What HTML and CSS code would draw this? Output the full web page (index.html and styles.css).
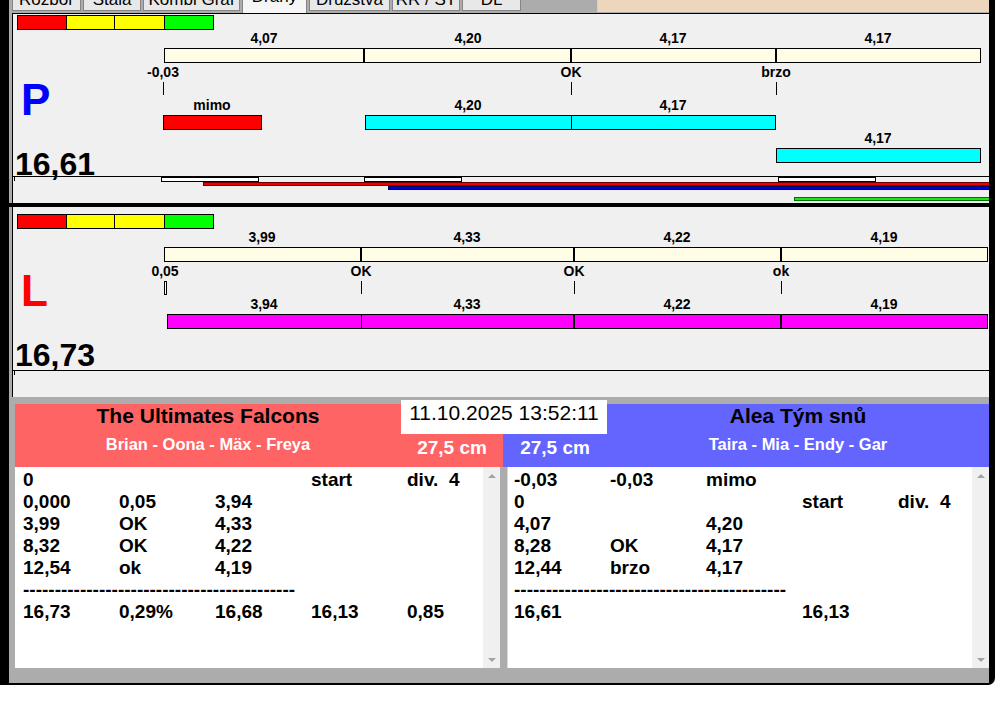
FILE: index.html
```html
<!DOCTYPE html>
<html lang="cs">
<head>
<meta charset="utf-8">
<title>Dráhy</title>
<link rel="stylesheet" href="styles.css">
</head>
<body>
<div class="screen">
  <div class="window">
    <div class="tabbar">
      <div class="tabs">
        <div class="tab w1"><span>Rozbor</span></div>
        <div class="tab w2"><span>Stala</span></div>
        <div class="tab w3"><span>Kombi Graf</span></div>
        <div class="tab w4 sel"><span>Dráhy</span></div>
        <div class="tab w5"><span>Družstva</span></div>
        <div class="tab w6"><span>RR / ST</span></div>
        <div class="tab w7"><span>DL</span></div>
      </div>
      <div class="tabfill"></div>
    </div>

    <div class="panel p1">
      <svg class="chart" width="976" height="189" viewBox="13 14 976 189" shape-rendering="crispEdges">
        <rect x="17.5" y="15.5" width="49" height="14" fill="#ff0000" stroke="#000"/>
        <rect x="66.5" y="15.5" width="48" height="14" fill="#ffff00" stroke="#000"/>
        <rect x="114.5" y="15.5" width="50" height="14" fill="#ffff00" stroke="#000"/>
        <rect x="164.5" y="15.5" width="49" height="14" fill="#00ff00" stroke="#000"/>

        <text class="lbl" x="264" y="43">4,07</text>
        <text class="lbl" x="468" y="43">4,20</text>
        <text class="lbl" x="673" y="43">4,17</text>
        <text class="lbl" x="878" y="43">4,17</text>
        <rect x="164.5" y="48.5" width="816" height="14" fill="#fffde6" stroke="#000"/>
        <line x1="364" y1="48" x2="364" y2="63" stroke="#000" stroke-width="2"/>
        <line x1="571" y1="48" x2="571" y2="63" stroke="#000" stroke-width="2"/>
        <line x1="776" y1="48" x2="776" y2="63" stroke="#000" stroke-width="2"/>

        <text class="lbl" x="163" y="77">-0,03</text>
        <text class="lbl" x="571" y="77">OK</text>
        <text class="lbl" x="776" y="77">brzo</text>
        <line x1="163.5" y1="82" x2="163.5" y2="95" stroke="#000"/>
        <line x1="571.5" y1="82" x2="571.5" y2="95" stroke="#000"/>
        <line x1="776.5" y1="82" x2="776.5" y2="95" stroke="#000"/>

        <text class="big" x="21" y="115" fill="#0000ff">P</text>

        <text class="lbl" x="212" y="110">mimo</text>
        <text class="lbl" x="468" y="110">4,20</text>
        <text class="lbl" x="673" y="110">4,17</text>
        <rect x="163.5" y="115.5" width="98" height="14" fill="#ff0000" stroke="#000"/>
        <rect x="365.5" y="115.5" width="410" height="14" fill="#00ffff" stroke="#000"/>
        <line x1="571.5" y1="115" x2="571.5" y2="130" stroke="#000"/>

        <text class="lbl" x="878" y="143">4,17</text>
        <rect x="776.5" y="148.5" width="204" height="14" fill="#00ffff" stroke="#000"/>

        <text class="num" x="15" y="175">16,61</text>

        <line x1="13" y1="176.5" x2="989" y2="176.5" stroke="#000"/>
        <line x1="14.5" y1="177" x2="14.5" y2="181" stroke="#000"/>
        <rect x="161.5" y="177.5" width="97" height="4" fill="#fff" stroke="#000"/>
        <rect x="364.5" y="177.5" width="97" height="4" fill="#fff" stroke="#000"/>
        <rect x="778.5" y="177.5" width="97" height="4" fill="#fff" stroke="#000"/>
        <rect x="203.5" y="182.5" width="786" height="3" fill="#ee0000" stroke="#700000"/>
        <rect x="388.5" y="186.5" width="601" height="3" fill="#0000dd" stroke="#000060"/>
        <rect x="794.5" y="197.5" width="195" height="3" fill="#22e022" stroke="#007000"/>
      </svg>
    </div>

    <div class="sep"></div>

    <div class="panel p2">
      <svg class="chart" width="976" height="190" viewBox="13 207 976 190" shape-rendering="crispEdges">
        <rect x="17.5" y="214.5" width="49" height="14" fill="#ff0000" stroke="#000"/>
        <rect x="66.5" y="214.5" width="48" height="14" fill="#ffff00" stroke="#000"/>
        <rect x="114.5" y="214.5" width="50" height="14" fill="#ffff00" stroke="#000"/>
        <rect x="164.5" y="214.5" width="49" height="14" fill="#00ff00" stroke="#000"/>

        <text class="lbl" x="262" y="242">3,99</text>
        <text class="lbl" x="467" y="242">4,33</text>
        <text class="lbl" x="677" y="242">4,22</text>
        <text class="lbl" x="884" y="242">4,19</text>
        <rect x="164.5" y="247.5" width="823" height="14" fill="#fffde6" stroke="#000"/>
        <line x1="361" y1="247" x2="361" y2="262" stroke="#000" stroke-width="2"/>
        <line x1="574" y1="247" x2="574" y2="262" stroke="#000" stroke-width="2"/>
        <line x1="781" y1="247" x2="781" y2="262" stroke="#000" stroke-width="2"/>

        <text class="lbl" x="165" y="276">0,05</text>
        <text class="lbl" x="361" y="276">OK</text>
        <text class="lbl" x="574" y="276">OK</text>
        <text class="lbl" x="781" y="276">ok</text>
        <rect x="164.5" y="281.5" width="2" height="13" fill="#fff" stroke="#000"/>
        <line x1="361.5" y1="281" x2="361.5" y2="294" stroke="#000"/>
        <line x1="574.5" y1="281" x2="574.5" y2="294" stroke="#000"/>
        <line x1="781.5" y1="281" x2="781.5" y2="294" stroke="#000"/>

        <text class="big" x="21" y="306" fill="#ff0000">L</text>

        <text class="lbl" x="264" y="309">3,94</text>
        <text class="lbl" x="467" y="309">4,33</text>
        <text class="lbl" x="677" y="309">4,22</text>
        <text class="lbl" x="884" y="309">4,19</text>
        <rect x="167.5" y="314.5" width="820" height="14" fill="#ff00ff" stroke="#000"/>
        <line x1="361.5" y1="314" x2="361.5" y2="329" stroke="#000"/>
        <line x1="574" y1="314" x2="574" y2="329" stroke="#000" stroke-width="2"/>
        <line x1="781" y1="314" x2="781" y2="329" stroke="#000" stroke-width="2"/>

        <text class="num" x="15" y="366">16,73</text>

        <line x1="13" y1="370.5" x2="989" y2="370.5" stroke="#000"/>
        <line x1="14.5" y1="371" x2="14.5" y2="375" stroke="#000"/>
      </svg>
    </div>

    <div class="bottom">
      <div class="heads">
        <div class="team red">
          <div class="tname">The Ultimates Falcons</div>
          <div class="members">Brian - Oona - Mäx - Freya</div>
        </div>
        <div class="mid">
          <div class="date">11.10.2025 13:52:11</div>
          <div class="cms">
            <div class="cm red">27,5 cm</div>
            <div class="cm blue">27,5 cm</div>
          </div>
        </div>
        <div class="team blue">
          <div class="tname">Alea Tým snů</div>
          <div class="members">Taira - Mia - Endy - Gar</div>
        </div>
      </div>

      <div class="lists">
        <div class="list l">
          <div class="rows">
            <div class="row"><span>0</span><span></span><span></span><span>start</span><span>div.  4</span></div>
            <div class="row"><span>0,000</span><span>0,05</span><span>3,94</span></div>
            <div class="row"><span>3,99</span><span>OK</span><span>4,33</span></div>
            <div class="row"><span>8,32</span><span>OK</span><span>4,22</span></div>
            <div class="row"><span>12,54</span><span>ok</span><span>4,19</span></div>
            <div class="row"><span class="dash">-------------------------------------------</span></div>
            <div class="row"><span>16,73</span><span>0,29%</span><span>16,68</span><span>16,13</span><span>0,85</span></div>
          </div>
          <div class="sb"><i class="up"></i><i class="dn"></i></div>
        </div>
        <div class="list r">
          <div class="rows">
            <div class="row"><span>-0,03</span><span>-0,03</span><span>mimo</span></div>
            <div class="row"><span>0</span><span></span><span></span><span>start</span><span>div.  4</span></div>
            <div class="row"><span>4,07</span><span></span><span>4,20</span></div>
            <div class="row"><span>8,28</span><span>OK</span><span>4,17</span></div>
            <div class="row"><span>12,44</span><span>brzo</span><span>4,17</span></div>
            <div class="row"><span class="dash">-------------------------------------------</span></div>
            <div class="row"><span>16,61</span><span></span><span></span><span>16,13</span></div>
          </div>
          <div class="sb"><i class="up"></i><i class="dn"></i></div>
        </div>
      </div>
    </div>
  </div>
</div>
</body>
</html>
```

FILE: styles.css
```css
* { box-sizing: border-box; margin: 0; padding: 0; }
html, body { background: #fff; }
body {
  width: 995px;
  height: 716px;
  overflow: hidden;
  font-family: "Liberation Sans", Arial, sans-serif;
  color: #000;
}
.screen {
  width: 995px;
  height: 685px;
  background: #000;
  padding: 0 6px 2px 9px;
  border-bottom-right-radius: 7px;
}
.window {
  height: 683px;
  background: #acacac;
  display: flex;
  flex-direction: column;
}

/* tabs */
.tabbar { height: 13px; display: flex; padding-left: 3px; flex: none; }
.tabs { display: flex; gap: 2px; height: 13px; }
.tab {
  height: 11px;
  background: #e8e8e8;
  border: 1px solid #858585;
  border-top: none;
  overflow: hidden;
  text-align: center;
  font-size: 17px;
}
.tab span { display: block; line-height: 20px; margin-top: -10px; white-space: nowrap; }
.tab.sel { height: 13px; background: #f6f6f6; border-bottom: none; }
.tab.sel span { margin-top: -13px; }
.w1 { width: 69px; }
.w2 { width: 58px; }
.w3 { width: 97px; }
.w4 { width: 65px; }
.w5 { width: 81px; }
.w6 { width: 68px; }
.w7 { width: 59px; }
.tabfill {
  flex: 1;
  height: 12px;
  margin-left: 76px;
  background: #eed6bd;
  border-left: 1px solid #d9cfc4;
}

/* chart panels */
.panel { background: #f0f0f0; border-left: 1px solid #000; margin-left: 3px; flex: none; }
.panel svg { display: block; }
.p1 { border-top: 1px solid #000; height: 190px; }
.p2 { height: 190px; }
.sep { height: 4px; background: #000; flex: none; }
.chart text { font-family: "Liberation Sans", Arial, sans-serif; font-weight: bold; }
.chart .lbl { font-size: 14px; text-anchor: middle; fill: #000; }
.chart .big { font-size: 44px; }
.chart .num { font-size: 32px; fill: #000; }

/* bottom */
.bottom { flex: 1; padding: 3px 0 0 6px; display: flex; flex-direction: column; }
.heads { display: flex; height: 67px; flex: none; }
.team { margin-top: 4px; text-align: center; color: #fff; }
.team.red { width: 386px; background: #ff6464; }
.team.blue { flex: 1; background: #6464ff; }
.tname { font-size: 21px; font-weight: bold; color: #000; line-height: 24px; }
.members { font-size: 16.5px; font-weight: bold; line-height: 20px; margin-top: 6px; }
.mid { width: 206px; display: flex; flex-direction: column; }
.date {
  height: 34px;
  background: #fff;
  font-size: 21px;
  line-height: 26px;
  text-align: center;
}
.cms { display: flex; flex: 1; }
.cm { font-size: 19px; font-weight: bold; color: #fff; line-height: 27px; text-align: center; }
.cm.red { width: 102px; background: #ff6464; }
.cm.blue { flex: 1; background: #6464ff; }

.lists { display: flex; gap: 7px; height: 201px; flex: none; }
.list { background: #fff; display: flex; min-width: 0; }
.list.l { width: 485px; }
.list.r { flex: 1; border-left: 1px solid #d8d8d8; }
.rows { flex: 1; min-width: 0; padding: 2px 0 0 8px; font-size: 19px; font-weight: bold; overflow: hidden; }
.list.r .rows { padding-left: 6px; }
.row {
  display: grid;
  grid-template-columns: 96px 96px 96px 96px 1fr;
  height: 22px;
  line-height: 22px;
  white-space: pre;
}
.dash { grid-column: 1 / -1; }
.sb {
  flex: none;
  width: 17px;
  background: #f0f0f0;
  display: flex;
  flex-direction: column;
  justify-content: space-between;
  align-items: center;
  padding: 7px 0 6px;
}
.up, .dn { width: 0; height: 0; border-left: 4px solid transparent; border-right: 4px solid transparent; }
.up { border-bottom: 4px solid #a3a3a3; }
.dn { border-top: 4px solid #a3a3a3; }
```
